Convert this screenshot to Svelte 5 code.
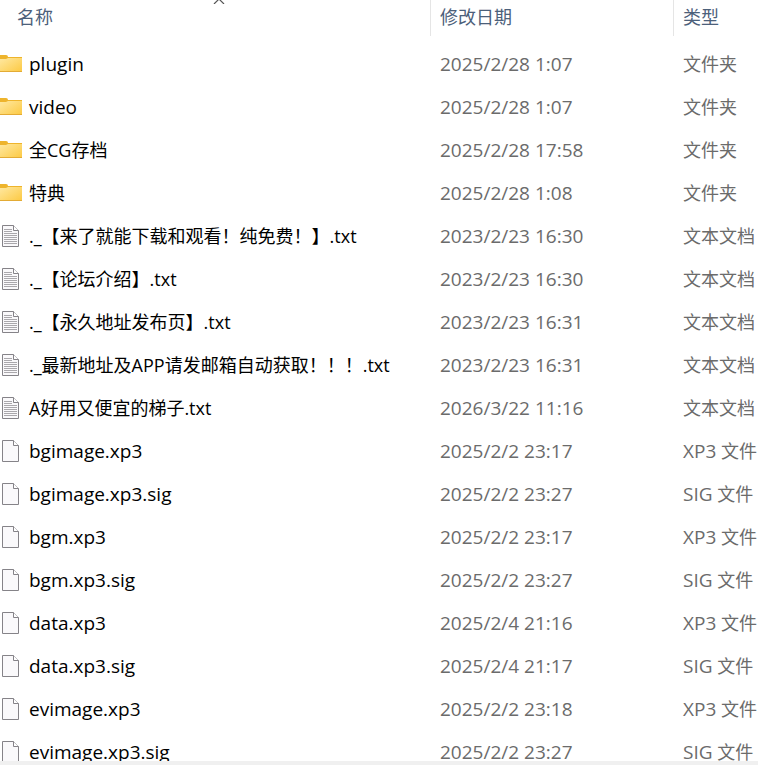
<script lang="ts">
  type Kind = "folder" | "text" | "file";

  interface Entry {
    name: string;
    modified: string;
    ext?: string;
    type: string;
    kind: Kind;
  }

  const folder = (name: string, modified: string): Entry => ({ name, modified, type: "文件夹", kind: "folder" });
  const text = (name: string, modified: string): Entry => ({ name, modified, type: "文本文档", kind: "text" });
  const file = (name: string, modified: string): Entry => ({
    name,
    modified,
    ext: name.split(".").pop()!.toUpperCase(),
    type: "文件",
    kind: "file",
  });

  const entries: Entry[] = [
    folder("plugin", "2025/2/28 1:07"),
    folder("video", "2025/2/28 1:07"),
    folder("全CG存档", "2025/2/28 17:58"),
    folder("特典", "2025/2/28 1:08"),
    text("._【来了就能下载和观看！纯免费！】.txt", "2023/2/23 16:30"),
    text("._【论坛介绍】.txt", "2023/2/23 16:30"),
    text("._【永久地址发布页】.txt", "2023/2/23 16:31"),
    text("._最新地址及APP请发邮箱自动获取！！！.txt", "2023/2/23 16:31"),
    text("A好用又便宜的梯子.txt", "2026/3/22 11:16"),
    file("bgimage.xp3", "2025/2/2 23:17"),
    file("bgimage.xp3.sig", "2025/2/2 23:27"),
    file("bgm.xp3", "2025/2/2 23:17"),
    file("bgm.xp3.sig", "2025/2/2 23:27"),
    file("data.xp3", "2025/2/4 21:16"),
    file("data.xp3.sig", "2025/2/4 21:17"),
    file("evimage.xp3", "2025/2/2 23:18"),
    file("evimage.xp3.sig", "2025/2/2 23:27"),
  ];

  // Latin letters look small next to Chinese ones, so they get a size more
  const isLatin = (s: string) => /^[\w.]+$/.test(s);
</script>

<div class="explorer">
  <div class="list">
    <table>
      <thead>
        <tr>
          <th class="col-name" aria-sort="ascending">
            <button type="button">名称</button>
            <svg class="sort" width="12" height="4" viewBox="0 0 12 4" aria-hidden="true">
              <path d="M1 4 L6 -1 L11 4" fill="none" stroke="#555" stroke-width="1.2" />
            </svg>
          </th>
          <th class="col-date"><button type="button">修改日期</button></th>
          <th class="col-type"><button type="button">类型</button></th>
        </tr>
      </thead>
      <tbody>
        {#each entries as entry (entry.name)}
          <tr>
            <td class="name">
              <div class="name__inner">
                {#if entry.kind === "folder"}
                  <svg class="icon" width="22" height="19" viewBox="0 0 22 19" aria-hidden="true">
                    <defs>
                      <linearGradient id="folder-front" x1="0" y1="0" x2="1" y2="1">
                        <stop offset="0" stop-color="#ffe8a0" />
                        <stop offset="1" stop-color="#fcc942" />
                      </linearGradient>
                    </defs>
                    <path d="M0 0H6Q8 0 8 2H22V8H0Z" fill="#eeb42c" />
                    <path d="M0 4H6L8 3H22V17H0Z" fill="url(#folder-front)" />
                    <path d="M0 16.5H22" stroke="#e3ab35" />
                  </svg>
                {:else}
                  <svg class="icon" width="22" height="23" viewBox="0 0 22 23" aria-hidden="true">
                    <path d="M2.5 .5H13.5L18.5 5.5V21.5H2.5Z" fill="#faf9fb" stroke="#858388" />
                    <path d="M13.5 .5V5.5H18.5" fill="#fff" stroke="#858388" />
                    {#if entry.kind === "text"}
                      <path
                        d="M4 4.5H12M4 6.5H12M4 8.5H17M4 10.5H17M4 12.5H17M4 14.5H17M4 16.5H17M4 18.5H17"
                        stroke="#aaa8ac"
                      />
                    {/if}
                  </svg>
                {/if}
                <span class="label" class:latin={isLatin(entry.name)}>{entry.name}</span>
              </div>
            </td>
            <td class="date latin">{entry.modified}</td>
            <td class="type">
              {#if entry.ext}<span class="latin">{entry.ext}</span>{" "}{/if}{entry.type}
            </td>
          </tr>
        {/each}
      </tbody>
    </table>
  </div>
  <div class="edge"></div>
</div>

<style>
  :global(body) {
    margin: 0;
    background: #fff;
  }

  .explorer {
    display: flex;
    flex-direction: column;
    height: 100vh;
    font-family: "Open Sans", "Noto Sans CJK SC", sans-serif;
    font-size: 18px;
    line-height: 24px;
    color: #6b6b6b;
  }

  .list {
    flex: 1;
    min-height: 0;
    overflow: hidden;
  }

  .edge {
    height: 4px;
    background: #f0f0f0;
  }

  table {
    width: 100%;
    table-layout: fixed;
    border-collapse: collapse;
  }

  .col-date {
    width: 243px;
  }

  .col-type {
    width: 85px;
  }

  th {
    position: relative;
    height: 43px;
    padding: 0;
    font-weight: 400;
    vertical-align: top;
  }

  .col-name {
    padding-left: 8px;
  }

  th button {
    display: block;
    width: 100%;
    height: 36px;
    padding: 0 9px 2px;
    border: 0;
    background: none;
    color: #4c607a;
    font: inherit;
    text-align: left;
  }

  .col-date button,
  .col-type button {
    border-left: 1px solid #e5e5e5;
  }

  .sort {
    position: absolute;
    top: 0;
    left: calc(50% - 2px);
  }

  td {
    height: 43px;
    padding: 0;
    white-space: nowrap;
  }

  .name {
    color: #000;
  }

  .name__inner {
    display: flex;
    align-items: center;
    gap: 7px;
  }

  .icon {
    flex: none;
  }

  .label {
    padding-bottom: 2px;
  }

  .date,
  .type {
    padding: 0 0 2px 10px;
  }

  td.date,
  td.type {
    height: 41px;
  }

  .latin {
    font-size: 19px;
  }
</style>
